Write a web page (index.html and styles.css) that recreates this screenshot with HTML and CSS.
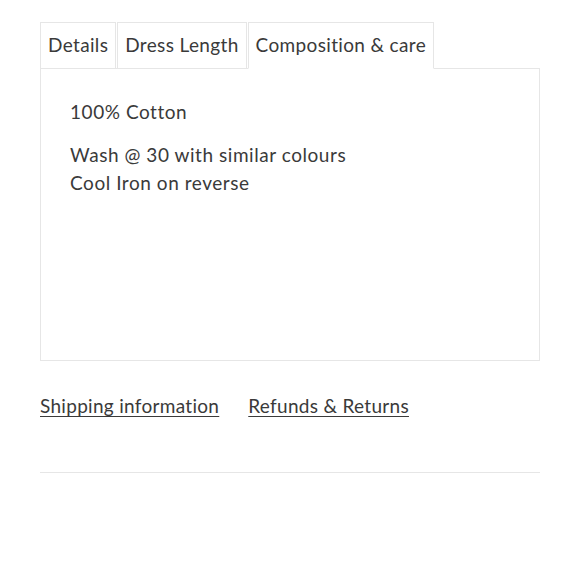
FILE: index.html
```html
<!DOCTYPE html>
<html>
<head>
<meta charset="utf-8">
<link rel="stylesheet" href="styles.css">
</head>
<body>
<div class="page">
  <div class="tabs">
    <div class="tab">Details</div>
    <div class="tab">Dress Length</div>
    <div class="tab active">Composition &amp; care</div>
  </div>
  <div class="panel">
    <p class="first">100% Cotton</p>
    <p>Wash @ 30 with similar colours<br>Cool Iron on reverse</p>
  </div>
  <div class="links">
    <a href="#">Shipping information</a>
    <a href="#">Refunds &amp; Returns</a>
  </div>
  <hr class="rule">
</div>
</body>
</html>
```
FILE: styles.css
```css
html, body {
  margin: 0;
  padding: 0;
  background: #fff;
}
body {
  font-family: "Lato", "Noto Sans", sans-serif;
  color: #3a3a3a;
  font-size: 19px;
}
.page {
  padding: 22px 40px 0 40px;
}
.tabs {
  display: flex;
  gap: 1px;
  position: relative;
  z-index: 1;
  margin-bottom: -1px;
}
.tab {
  border: 1px solid #e6e6e6;
  background: #fff;
  padding: 0 7px;
  height: 45px;
  line-height: 43px;
  font-size: 19px;
  color: #3a3a3a;
  letter-spacing: 0.35px;
}
.tab.active {
  border-bottom-color: #fff;
}
.panel {
  border: 1px solid #e6e6e6;
  height: 291px;
  padding: 0 29px;
}
.panel p {
  margin: 0;
  line-height: 28px;
  letter-spacing: 0.55px;
}
.panel p.first {
  margin-top: 29px;
  margin-bottom: 15px;
}
.links {
  display: flex;
  gap: 29px;
  margin-top: 31px;
}
.links a {
  color: #3a3a3a;
  text-decoration: underline;
  text-decoration-thickness: 1px;
  text-underline-offset: 3px;
  letter-spacing: 0.3px;
  line-height: 28px;
}
.rule {
  border: 0;
  border-top: 1px solid #e6e6e6;
  margin: 52px 0 0 0;
}
```
